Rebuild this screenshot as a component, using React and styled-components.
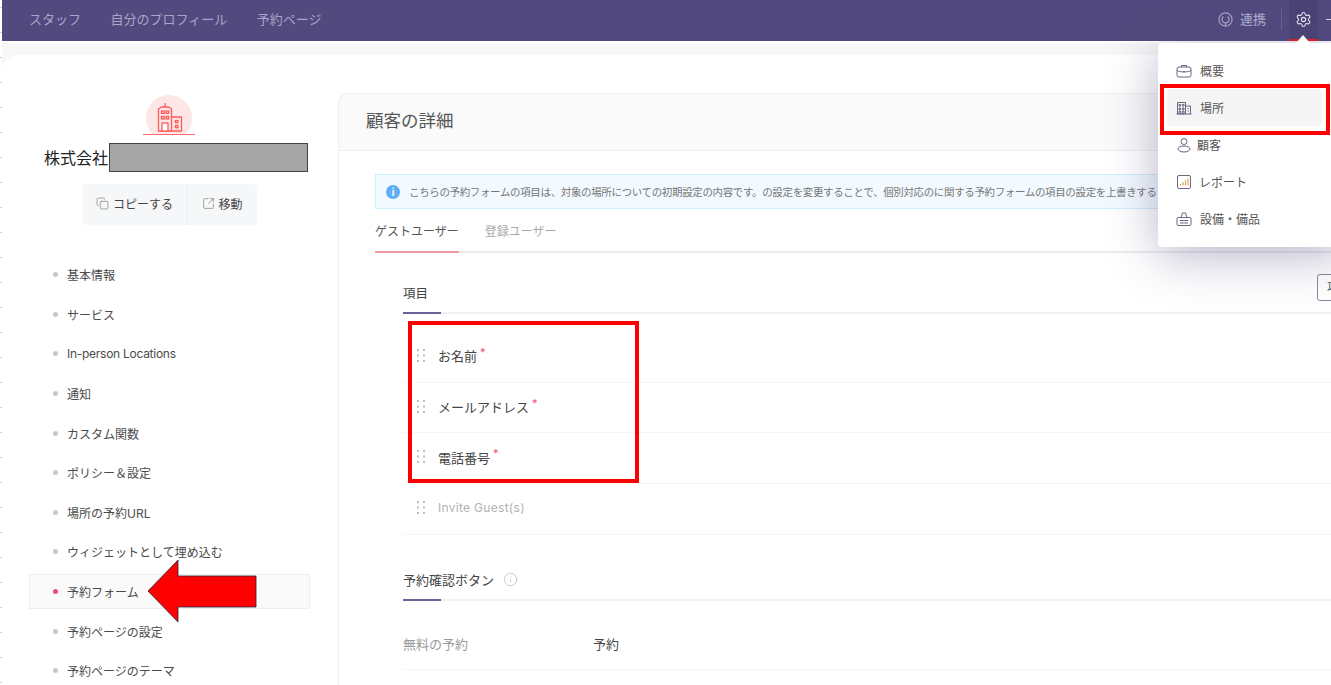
import React from "react";
import styled, { createGlobalStyle } from "styled-components";
import { Settings, Copy, SquareArrowOutUpRight, Info } from "lucide-react";

const Global = createGlobalStyle`
  html, body { margin: 0; padding: 0; background: #fff; }
  body { font-family: Inter, "Noto Sans CJK JP", "Noto Sans", sans-serif; color: #444; }
  * { box-sizing: border-box; }
`;

const Page = styled.div`
  position: relative;
  display: flex;
  width: 1331px;
  height: 685px;
  overflow: hidden;
`;
const Ruler = styled.div`
  flex: 0 0 2px;
  background: repeating-linear-gradient(to bottom, #fff 0 7px, #ccc 7px 8px, #fff 8px 25px);
`;
const Main = styled.div`
  flex: 1;
  min-width: 0;
  display: flex;
  flex-direction: column;
  background: #f7f7f7;
`;
const TopBar = styled.header`
  flex: 0 0 41px;
  display: flex;
  align-items: center;
  justify-content: space-between;
  padding-left: 27px;
  background: #524a7e;
  margin-bottom: 2px;
  box-shadow: 0 2px 0 #fff;
`;
const TopNav = styled.nav`
  display: flex;
  gap: 29.5px;
  padding-bottom: 4px;
`;
const TopLink = styled.span`
  font-size: 13px;
  color: #a9a5c8;
`;
const TopRight = styled.div`
  display: flex;
  align-items: center;
  height: 100%;
`;
const Connect = styled.span`
  display: flex;
  align-items: center;
  gap: 7px;
  font-size: 13px;
  font-weight: 500;
  line-height: 17px;
  color: #a9a5c8;
  padding-right: 15px;
  height: 21px;
  margin-bottom: 2px;
  border-right: 1px solid #6a638f;
`;
const GearBox = styled.div`
  width: 29px;
  height: 41px;
  margin-left: 7px;
  display: flex;
  align-items: center;
  justify-content: center;
  background: #4b4375;
  border-bottom: 2px solid #f01b1b;
  color: #f0eff6;
`;
const Dash = styled.span`
  width: 5px;
  height: 1px;
  margin: 0 0 2px 8px;
  background: #d5d2e4;
`;
const Card = styled.main`
  flex: 1;
  min-height: 0;
  margin-top: 12px;
  display: flex;
  background: #fff;
  border-top-left-radius: 16px;
  overflow: hidden;
`;
const Sidebar = styled.aside`
  flex: 0 0 336px;
  display: flex;
  flex-direction: column;
  padding: 40px 28px 0 27px;
  & > * { flex-shrink: 0; }
`;
const CompanyIcon = styled.div`
  align-self: center;
  height: 40px;
  margin-right: 1px;
`;
const CompanyName = styled.div`
  position: relative;
  height: 30px;
  margin-top: 8px;
  padding-left: 15px;
  font-size: 16px;
  line-height: 30px;
  color: #222;
`;
const Redaction = styled.span`
  position: absolute;
  left: 80px;
  top: 0;
  width: 199px;
  height: 29px;
  background: #a5a5a5;
  border: 1px solid #444;
`;
const ActionGroup = styled.div`
  align-self: center;
  display: flex;
  height: 41px;
  margin-top: 11px;
  background: #f6f7f9;
  border-radius: 4px;
`;
const ActionButton = styled.span`
  display: flex;
  align-items: center;
  gap: 4px;
  padding: 0 14px 2px 13.5px;
  font-size: 12px;
  color: #444;
  & + & { border-left: 1px solid #ebecef; }
`;
const SideNav = styled.ul`
  list-style: none;
  margin: 32px 0 0;
  padding: 0;
`;
const SideItem = styled.li`
  display: flex;
  align-items: center;
  gap: 9px;
  height: 35px;
  margin-bottom: 4.65px;
  padding-left: 23px;
  font-size: 12px;
  letter-spacing: ${(p) => (p.$latin ? "-0.27px" : "0")};
  color: #4a4a4a;
  background: ${(p) => (p.$active ? "#fafafa" : "transparent")};
  border: 1px solid ${(p) => (p.$active ? "#eeeeee" : "transparent")};
`;
const Bullet = styled.i`
  width: 5px;
  height: 5px;
  border-radius: 50%;
  background: ${(p) => (p.$active ? "#ea4c7c" : "#c8c8c8")};
`;
const Panel = styled.section`
  flex: 1;
  min-width: 0;
  margin-top: 38px;
  border-left: 1px solid #eee;
  border-top-left-radius: 10px;
`;
const PanelHeader = styled.div`
  height: 58px;
  padding: 0 0 5px 27px;
  display: flex;
  align-items: center;
  font-size: 17.5px;
  color: #555;
  background: #fafafa;
  border: 1px solid #eeeeee;
  border-left: 0;
  border-right: 0;
  border-top-left-radius: 10px;
`;
const Body = styled.div`
  padding: 23px 0 0 36px;
`;
const Banner = styled.div`
  display: flex;
  align-items: center;
  gap: 9px;
  height: 35px;
  padding-left: 10px;
  font-size: 10.5px;
  letter-spacing: -0.36px;
  white-space: nowrap;
  overflow: hidden;
  color: #777;
  background: #f3faff;
  border: 1px solid #cdf0ff;
`;
const Dot = styled.span`
  flex: 0 0 14px;
  height: 14px;
  border-radius: 50%;
  background: #5faef5;
  color: #fff;
  font-size: 10px;
  font-weight: 700;
  letter-spacing: 0;
  line-height: 14px;
  text-align: center;
`;
const Tabs = styled.div`
  display: flex;
  gap: 26px;
  height: 44px;
  border-bottom: 2px solid #eeebf0;
`;
const Tab = styled.span`
  height: 44px;
  padding-top: 14px;
  font-size: 12px;
  line-height: 18px;
  color: ${(p) => (p.$active ? "#555" : "#aaa")};
  border-bottom: 2px solid ${(p) => (p.$active ? "#f39aa8" : "transparent")};
`;
const Section = styled.div`
  margin-left: 28px;
  margin-top: ${(p) => p.$top}px;
`;
const SectionHead = styled.div`
  display: flex;
  align-items: flex-end;
  justify-content: space-between;
  height: 39px;
  border-bottom: 2px solid #f1f1f3;
`;
const SectionTitle = styled.span`
  position: relative;
  display: flex;
  align-items: center;
  gap: 9px;
  height: 39px;
  min-width: 38px;
  margin-bottom: -2px;
  padding-bottom: 4px;
  font-size: ${(p) => p.$size}px;
  color: #444;
  &::after {
    content: "";
    position: absolute;
    left: 0;
    bottom: 0;
    width: 38px;
    height: 2px;
    background: #6a6199;
  }
`;
const TitleInfo = styled.span`
  display: flex;
  color: #bbb;
`;
const AddButton = styled.span`
  flex: 0 0 auto;
  height: 27px;
  width: 70px;
  margin: 0 -56px 11px 0;
  padding-left: 9px;
  font-size: 12px;
  line-height: 25px;
  white-space: nowrap;
  color: #555;
  background: #fff;
  border: 1px solid #8a86a0;
  border-radius: 3px;
`;
const FieldList = styled.div`
  padding-top: 18px;
`;
const FieldRow = styled.div`
  display: flex;
  align-items: center;
  gap: 12px;
  height: 50.7px;
  padding: 0 0 2px 13px;
  font-size: ${(p) => (p.$muted ? 12 : 13)}px;
  letter-spacing: ${(p) => (p.$muted ? "0.3px" : "0")};
  color: ${(p) => (p.$muted ? "#b2b2b2" : "#444")};
  border-bottom: 1px solid #f5f5f5;
`;
const Required = styled.sup`
  margin-left: 3px;
  font-size: 11px;
  line-height: 0;
  color: #f0506e;
`;
const ValueRow = styled.div`
  display: flex;
  align-items: flex-end;
  height: 69px;
  padding-bottom: 16px;
  font-size: 13px;
  border-bottom: 1px solid #f5f5f5;
`;
const ValueLabel = styled.span`
  width: 190px;
  color: #999;
`;
const ValueText = styled.span`
  color: #444;
`;
const Menu = styled.div`
  position: absolute;
  left: 1158px;
  top: 43px;
  width: 190px;
  height: 204px;
  padding-top: 9px;
  background: #fff;
  border-radius: 4px;
  box-shadow: 0 8px 50px rgba(82, 74, 126, 0.42);
  &::before {
    content: "";
    position: absolute;
    left: 138px;
    top: -8px;
    border: 7px solid transparent;
    border-top: 0;
    border-bottom: 8px solid #fff;
  }
`;
const MenuItem = styled.div`
  display: flex;
  align-items: center;
  gap: 8px;
  width: 155px;
  height: 37px;
  margin-left: 9px;
  padding-left: 9px;
  font-size: 12px;
  color: #555;
  border-radius: 4px;
  background: ${(p) => (p.$active ? "#f5f5f5" : "transparent")};
`;
const MenuLabel = styled.span`
  margin-left: ${(p) => p.$nudge || 0}px;
`;
const RedFrame = styled.div`
  position: absolute;
  left: ${(p) => p.$x}px;
  top: ${(p) => p.$y}px;
  width: ${(p) => p.$w}px;
  height: ${(p) => p.$h}px;
  border: 4px solid #ff0000;
`;
const ArrowMark = styled.svg`
  position: absolute;
  left: 146px;
  top: 558px;
`;

const Stroke = ({ children, size = 16, color = "#6b6580", vb = 16 }) => (
  <svg width={size} height={size} viewBox={`0 0 ${vb} ${vb}`} fill="none" stroke={color} strokeWidth="1">
    {children}
  </svg>
);

const BuildingBadge = () => (
  <svg width="52" height="40" viewBox="0 0 52 40" fill="none">
    <circle cx="26" cy="23" r="23" fill="#fde6e6" />
    <rect x="0" y="39" width="52" height="1" fill="#ff6a6a" />
    <g stroke="#ff5a5a" strokeWidth="1.3">
      <path d="M22 8v4" />
      <path d="M15.5 36V14l3-2h7l3 2v22z" />
      <rect x="18.5" y="16" width="2.6" height="2.4" />
      <rect x="23" y="16" width="2.6" height="2.4" />
      <rect x="18.5" y="21.5" width="2.6" height="2.4" />
      <rect x="23" y="21.5" width="2.6" height="2.4" />
      <rect x="19" y="28" width="6" height="8" fill="#fff" />
      <path d="M28.5 22H38.5v14H28.5" />
      <rect x="32.5" y="25.5" width="2.4" height="2.2" />
      <rect x="32.5" y="30.5" width="2.4" height="2.2" />
    </g>
  </svg>
);

const ConnectIcon = () => (
  <svg width="15" height="15" viewBox="0 0 15 15" fill="none" stroke="#a9a5c8" strokeWidth="1.2">
    <circle cx="7.5" cy="7.5" r="6.6" />
    <path d="M5.4 4.4a3.6 3.6 0 1 0 4.2 0M7.5 11v3" />
  </svg>
);

const Grip = () => (
  <svg width="10" height="14" viewBox="0 0 10 14" fill="#bdbdbd">
    {[0, 5.5, 11].map((y) => (
      <React.Fragment key={y}>
        <rect x="1" y={y} width="2" height="2" />
        <rect x="7" y={y} width="2" height="2" />
      </React.Fragment>
    ))}
  </svg>
);

const BriefcaseIcon = () => (
  <Stroke>
    <rect x="1" y="4" width="14" height="10" rx="2" />
    <path d="M5.5 4V2.5h5V4M1 7.5c4 2 10 2 14 0M7 8.5h2" />
  </Stroke>
);
const PlaceIcon = () => (
  <Stroke>
    <path d="M1.5 14V2.5h8V14M9.5 6h5v8M.5 14h15" />
    <path d="M3 4.5h1.6v1.6H3zM6.4 4.5H8v1.6H6.4zM3 8h1.6v1.6H3zM6.4 8H8v1.6H6.4zM3 11h1.6v3H3zM6.4 11H8v3H6.4zM11.5 8.5h1.2M11.5 11h1.2" />
  </Stroke>
);
const PersonIcon = () => (
  <Stroke>
    <circle cx="8" cy="4.5" r="3" />
    <ellipse cx="8" cy="12" rx="6" ry="3" />
  </Stroke>
);
const ReportIcon = () => (
  <Stroke>
    <rect x="1.5" y="1.5" width="13" height="13" rx="1.5" />
    <path d="M4.5 11.5v-1.5M7 11.5V8M9.5 11.5V6M12 11.5V4.5" stroke="#d9a55f" strokeWidth="1.2" />
  </Stroke>
);
const EquipIcon = () => (
  <Stroke>
    <rect x="1" y="6.5" width="14" height="8" rx="1" />
    <path d="M5 6.5 6.5 2h3L11 6.5M4 9.5h8M4 12h8" />
  </Stroke>
);

const sideItems = [
  "基本情報",
  "サービス",
  "In-person Locations",
  "通知",
  "カスタム関数",
  "ポリシー＆設定",
  "場所の予約URL",
  "ウィジェットとして埋め込む",
  "予約フォーム",
  "予約ページの設定",
  "予約ページのテーマ",
];

const fields = ["お名前", "メールアドレス", "電話番号"];

const menuItems = [
  { label: "概要", icon: <BriefcaseIcon /> },
  { label: "場所", icon: <PlaceIcon />, active: true },
  { label: "顧客", icon: <PersonIcon />, nudge: -3 },
  { label: "レポート", icon: <ReportIcon />, nudge: -1 },
  { label: "設備・備品", icon: <EquipIcon /> },
];

const bannerText =
  "こちらの予約フォームの項目は、対象の場所についての初期設定の内容です。の設定を変更することで、個別対応のに関する予約フォームの項目の設定を上書きする";

export default function App() {
  return (
    <Page>
      <Global />
      <Ruler />
      <Main>
        <TopBar>
          <TopNav>
            <TopLink>スタッフ</TopLink>
            <TopLink>自分のプロフィール</TopLink>
            <TopLink>予約ページ</TopLink>
          </TopNav>
          <TopRight>
            <Connect>
              <ConnectIcon />
              連携
            </Connect>
            <GearBox>
              <Settings size={17} strokeWidth={1.5} />
            </GearBox>
            <Dash />
          </TopRight>
        </TopBar>
        <Card>
          <Sidebar>
            <CompanyIcon>
              <BuildingBadge />
            </CompanyIcon>
            <CompanyName>
              株式会社
              <Redaction />
            </CompanyName>
            <ActionGroup>
              <ActionButton>
                <Copy size={13} strokeWidth={1.2} color="#777" />
                コピーする
              </ActionButton>
              <ActionButton>
                <SquareArrowOutUpRight size={13} strokeWidth={1.2} color="#777" />
                移動
              </ActionButton>
            </ActionGroup>
            <SideNav>
              {sideItems.map((t) => (
                <SideItem key={t} $active={t === "予約フォーム"} $latin={t === "In-person Locations"}>
                  <Bullet $active={t === "予約フォーム"} />
                  {t}
                </SideItem>
              ))}
            </SideNav>
          </Sidebar>
          <Panel>
            <PanelHeader>顧客の詳細</PanelHeader>
            <Body>
              <Banner>
                <Dot>i</Dot>
                {bannerText}
              </Banner>
              <Tabs>
                <Tab $active>ゲストユーザー</Tab>
                <Tab>登録ユーザー</Tab>
              </Tabs>
              <Section $top={22}>
                <SectionHead>
                  <SectionTitle $size={12.5}>項目</SectionTitle>
                  <AddButton>項目</AddButton>
                </SectionHead>
                <FieldList>
                  {fields.map((f) => (
                    <FieldRow key={f}>
                      <Grip />
                      <span>
                        {f}
                        <Required>*</Required>
                      </span>
                    </FieldRow>
                  ))}
                  <FieldRow $muted>
                    <Grip />
                    Invite Guest(s)
                  </FieldRow>
                </FieldList>
              </Section>
              <Section $top={27}>
                <SectionHead>
                  <SectionTitle $size={13}>
                    予約確認ボタン
                    <TitleInfo>
                      <Info size={15} strokeWidth={1.2} />
                    </TitleInfo>
                  </SectionTitle>
                </SectionHead>
                <ValueRow>
                  <ValueLabel>無料の予約</ValueLabel>
                  <ValueText>予約</ValueText>
                </ValueRow>
              </Section>
            </Body>
          </Panel>
        </Card>
      </Main>
      <Menu>
        {menuItems.map((m) => (
          <MenuItem key={m.label} $active={m.active}>
            {m.icon}
            <MenuLabel $nudge={m.nudge}>{m.label}</MenuLabel>
          </MenuItem>
        ))}
      </Menu>
      <RedFrame $x={1160} $y={84} $w={170} $h={51} />
      <RedFrame $x={408} $y={321} $w={231} $h={162} />
      <ArrowMark width="112" height="66" viewBox="0 0 112 66">
        <path d="M2 33 32 2v16h78v31H32v15z" fill="#ff0000" stroke="#1f2a44" strokeWidth="0.8" />
      </ArrowMark>
    </Page>
  );
}
